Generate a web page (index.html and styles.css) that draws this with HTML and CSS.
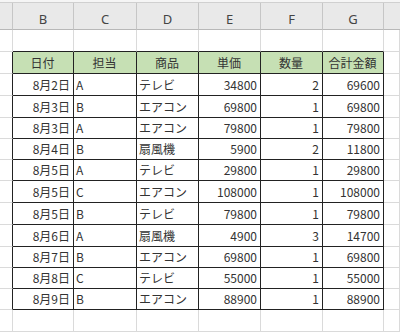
FILE: index.html
```html
<!DOCTYPE html>
<html lang="ja">
<head>
<meta charset="utf-8">
<link rel="stylesheet" href="styles.css">
</head>
<body>
<div class="sheet">
  <div class="top"></div><div class="top"></div><div class="top"></div><div class="top"></div><div class="top"></div><div class="top"></div><div class="top"></div><div class="top"></div>

  <div class="ch"></div><div class="ch">B</div><div class="ch">C</div><div class="ch">D</div><div class="ch">E</div><div class="ch">F</div><div class="ch">G</div><div class="ch last"></div>

  <div class="c"></div><div class="c above"></div><div class="c above"></div><div class="c above"></div><div class="c above"></div><div class="c above"></div><div class="c above"></div><div class="c"></div>

  <div class="c edge"></div><div class="t h">日付</div><div class="t h">担当</div><div class="t h">商品</div><div class="t h">単価</div><div class="t h">数量</div><div class="t h">合計金額</div><div class="c"></div>

  <div class="c edge"></div><div class="t r">8月2日</div><div class="t">A</div><div class="t">テレビ</div><div class="t r">34800</div><div class="t r">2</div><div class="t r">69600</div><div class="c"></div>
  <div class="c edge"></div><div class="t r">8月3日</div><div class="t">B</div><div class="t">エアコン</div><div class="t r">69800</div><div class="t r">1</div><div class="t r">69800</div><div class="c"></div>
  <div class="c edge"></div><div class="t r">8月3日</div><div class="t">A</div><div class="t">エアコン</div><div class="t r">79800</div><div class="t r">1</div><div class="t r">79800</div><div class="c"></div>
  <div class="c edge"></div><div class="t r">8月4日</div><div class="t">B</div><div class="t">扇風機</div><div class="t r">5900</div><div class="t r">2</div><div class="t r">11800</div><div class="c"></div>
  <div class="c edge"></div><div class="t r">8月5日</div><div class="t">A</div><div class="t">テレビ</div><div class="t r">29800</div><div class="t r">1</div><div class="t r">29800</div><div class="c"></div>
  <div class="c edge"></div><div class="t r">8月5日</div><div class="t">C</div><div class="t">エアコン</div><div class="t r">108000</div><div class="t r">1</div><div class="t r">108000</div><div class="c"></div>
  <div class="c edge"></div><div class="t r">8月5日</div><div class="t">B</div><div class="t">テレビ</div><div class="t r">79800</div><div class="t r">1</div><div class="t r">79800</div><div class="c"></div>
  <div class="c edge"></div><div class="t r">8月6日</div><div class="t">A</div><div class="t">扇風機</div><div class="t r">4900</div><div class="t r">3</div><div class="t r">14700</div><div class="c"></div>
  <div class="c edge"></div><div class="t r">8月7日</div><div class="t">B</div><div class="t">エアコン</div><div class="t r">69800</div><div class="t r">1</div><div class="t r">69800</div><div class="c"></div>
  <div class="c edge"></div><div class="t r">8月8日</div><div class="t">C</div><div class="t">テレビ</div><div class="t r">55000</div><div class="t r">1</div><div class="t r">55000</div><div class="c"></div>
  <div class="c edge"></div><div class="t r">8月9日</div><div class="t">B</div><div class="t">エアコン</div><div class="t r">88900</div><div class="t r">1</div><div class="t r">88900</div><div class="c"></div>

  <div class="c"></div><div class="c"></div><div class="c"></div><div class="c"></div><div class="c"></div><div class="c"></div><div class="c"></div><div class="c"></div>
</div>
</body>
</html>
```
FILE: styles.css
```css
* { box-sizing: border-box; }
html, body { margin: 0; padding: 0; background: #ffffff; }
body { width: 400px; height: 332px; overflow: hidden; }

.sheet {
  display: grid;
  grid-template-columns: 13px 61px 63px 62px 62px 62px 61px 16px;
  grid-template-rows: 3px 27px 22px 22px 22px 22px 21px 21px 21px 22px 22px 22px 21px 21px 21px 22px;
  font-family: "Noto Sans CJK JP", "Noto Sans", sans-serif;
  font-size: 12px;
  color: #333;
}

.top {
  background: #f5f5f5;
  border-bottom: 1px solid #d0d0d0;
}

.ch {
  background: #e9e9e9;
  border-right: 1px solid #c6c6c6;
  border-bottom: 1px solid #b8b8b8;
  color: #444;
  font-family: "Noto Sans", "Liberation Sans", sans-serif;
  font-size: 13px;
  display: flex;
  align-items: center;
  justify-content: center;
  padding-top: 6px;
}
.ch.last { border-right: none; }

.c {
  border-right: 1px solid #dadada;
  border-bottom: 1px solid #dadada;
}
.c.above { border-bottom: 1px solid #222; }
.c.edge { border-right: 1px solid #222; }

.t {
  border-right: 1px solid #222;
  border-bottom: 1px solid #222;
  display: flex;
  align-items: center;
  padding: 0 3px 0 2px;
  white-space: nowrap;
  line-height: 1;
}
.t.r { justify-content: flex-end; }
.t.h {
  background: #c6e0b4;
  justify-content: center;
}
```
